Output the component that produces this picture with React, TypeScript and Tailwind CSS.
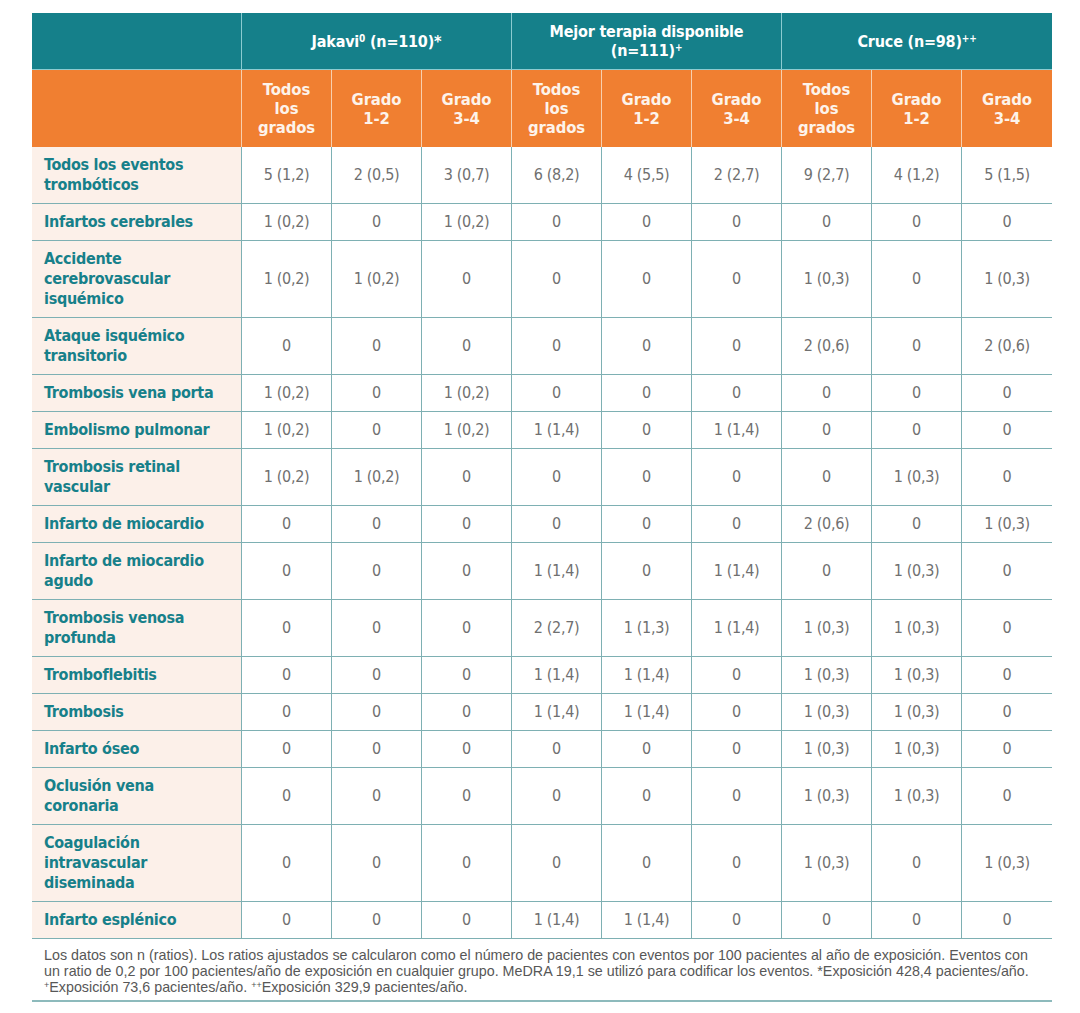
const font = "font-['Liberation_Sans_Narrow','DejaVu_Sans_Condensed','Arial_Narrow',sans-serif] [font-stretch:condensed]";

type Row = { label: string[]; values: string[] };

const rows: Row[] = [
  { label: ["Todos los eventos", "trombóticos"], values: ["5 (1,2)", "2 (0,5)", "3 (0,7)", "6 (8,2)", "4 (5,5)", "2 (2,7)", "9 (2,7)", "4 (1,2)", "5 (1,5)"] },
  { label: ["Infartos cerebrales"], values: ["1 (0,2)", "0", "1 (0,2)", "0", "0", "0", "0", "0", "0"] },
  { label: ["Accidente", "cerebrovascular", "isquémico"], values: ["1 (0,2)", "1 (0,2)", "0", "0", "0", "0", "1 (0,3)", "0", "1 (0,3)"] },
  { label: ["Ataque isquémico", "transitorio"], values: ["0", "0", "0", "0", "0", "0", "2 (0,6)", "0", "2 (0,6)"] },
  { label: ["Trombosis vena porta"], values: ["1 (0,2)", "0", "1 (0,2)", "0", "0", "0", "0", "0", "0"] },
  { label: ["Embolismo pulmonar"], values: ["1 (0,2)", "0", "1 (0,2)", "1 (1,4)", "0", "1 (1,4)", "0", "0", "0"] },
  { label: ["Trombosis retinal", "vascular"], values: ["1 (0,2)", "1 (0,2)", "0", "0", "0", "0", "0", "1 (0,3)", "0"] },
  { label: ["Infarto de miocardio"], values: ["0", "0", "0", "0", "0", "0", "2 (0,6)", "0", "1 (0,3)"] },
  { label: ["Infarto de miocardio", "agudo"], values: ["0", "0", "0", "1 (1,4)", "0", "1 (1,4)", "0", "1 (0,3)", "0"] },
  { label: ["Trombosis venosa", "profunda"], values: ["0", "0", "0", "2 (2,7)", "1 (1,3)", "1 (1,4)", "1 (0,3)", "1 (0,3)", "0"] },
  { label: ["Tromboflebitis"], values: ["0", "0", "0", "1 (1,4)", "1 (1,4)", "0", "1 (0,3)", "1 (0,3)", "0"] },
  { label: ["Trombosis"], values: ["0", "0", "0", "1 (1,4)", "1 (1,4)", "0", "1 (0,3)", "1 (0,3)", "0"] },
  { label: ["Infarto óseo"], values: ["0", "0", "0", "0", "0", "0", "1 (0,3)", "1 (0,3)", "0"] },
  { label: ["Oclusión vena", "coronaria"], values: ["0", "0", "0", "0", "0", "0", "1 (0,3)", "1 (0,3)", "0"] },
  { label: ["Coagulación", "intravascular", "diseminada"], values: ["0", "0", "0", "0", "0", "0", "1 (0,3)", "0", "1 (0,3)"] },
  { label: ["Infarto esplénico"], values: ["0", "0", "0", "1 (1,4)", "1 (1,4)", "0", "0", "0", "0"] },
];

const subHeads = [
  ["Todos", "los", "grados"],
  ["Grado", "1-2"],
  ["Grado", "3-4"],
];

function Lines({ lines }: { lines: string[] }) {
  return (
    <>
      {lines.map((l, i) => (
        <span key={i} className="block whitespace-nowrap">
          {l}
        </span>
      ))}
    </>
  );
}

export default function App() {
  return (
    <div className="min-h-[1013px] w-[1080px] bg-white pl-[32px] pt-[13px]">
      <div className={`w-[1020px] ${font}`}>
        {/* group header */}
        <div className="grid h-[57px] grid-cols-[210px_270px_270px_270px] bg-[#15808a] text-[16px] font-bold leading-[19px] tracking-[-0.2px] text-white">
          <div className="border-r border-b border-[#8ccbd0]" />
          <div className="flex items-center justify-center border-r border-b border-[#8ccbd0] text-center">
            <span>
              Jakavi<sup className="text-[10px]">0</sup> (n=110)*
            </span>
          </div>
          <div className="flex flex-col items-center justify-center border-r border-b border-[#8ccbd0] text-center">
            <span>Mejor terapia disponible</span>
            <span>
              (n=111)<sup className="text-[10px]">+</sup>
            </span>
          </div>
          <div className="flex items-center justify-center border-b border-[#8ccbd0] text-center">
            <span>
              Cruce (n=98)<sup className="text-[10px]">++</sup>
            </span>
          </div>
        </div>

        {/* grade header */}
        <div className="grid h-[77px] grid-cols-[210px_repeat(9,90px)] bg-[#f07f31] text-[16.5px] font-bold leading-[19px] tracking-[-0.1px] text-[#fdf3ea]">
          <div className="border-r border-[#f8cfae]" />
          {[0, 1, 2].map((g) =>
            subHeads.map((h, i) => (
              <div
                key={`${g}-${i}`}
                className={`flex flex-col items-center justify-center text-center ${g === 2 && i === 2 ? "" : "border-r border-[#f8cfae]"}`}
              >
                <Lines lines={h} />
              </div>
            ))
          )}
        </div>

        {/* body */}
        {rows.map((r, ri) => (
          <div key={ri} className="grid grid-cols-[210px_repeat(9,90px)] border-b border-[#7eb0b3]">
            <div className="flex items-center border-r border-[#7eb0b3] bg-[#fcf0e9] px-3 py-2 text-[16px] font-bold leading-[20px] tracking-[-0.3px] text-[#17808a]">
              <div>
                <Lines lines={r.label} />
              </div>
            </div>
            {r.values.map((v, i) => (
              <div
                key={i}
                className={`flex items-center justify-center text-[16px] leading-[20px] tracking-[-0.3px] text-[#707070] ${i === 8 ? "" : "border-r border-[#7eb0b3]"}`}
              >
                {v}
              </div>
            ))}
          </div>
        ))}
      </div>

      {/* footnote */}
      <div className="w-[1020px] border-b-2 border-[#8dbabc] px-3 pb-[5px] pt-[8px] font-['Liberation_Sans',Arial,sans-serif] text-[14.3px] leading-[16px] text-[#575757]">
        <p className="whitespace-nowrap">
          Los datos son n (ratios). Los ratios ajustados se calcularon como el número de pacientes con eventos por 100 pacientes al año de exposición. Eventos con
        </p>
        <p className="whitespace-nowrap">
          un ratio de 0,2 por 100 pacientes/año de exposición en cualquier grupo. MeDRA 19,1 se utilizó para codificar los eventos. *Exposición 428,4 pacientes/año.
        </p>
        <p className="whitespace-nowrap">
          <sup className="text-[9px]">+</sup>Exposición 73,6 pacientes/año. <sup className="text-[9px]">++</sup>Exposición 329,9 pacientes/año.
        </p>
      </div>
    </div>
  );
}
